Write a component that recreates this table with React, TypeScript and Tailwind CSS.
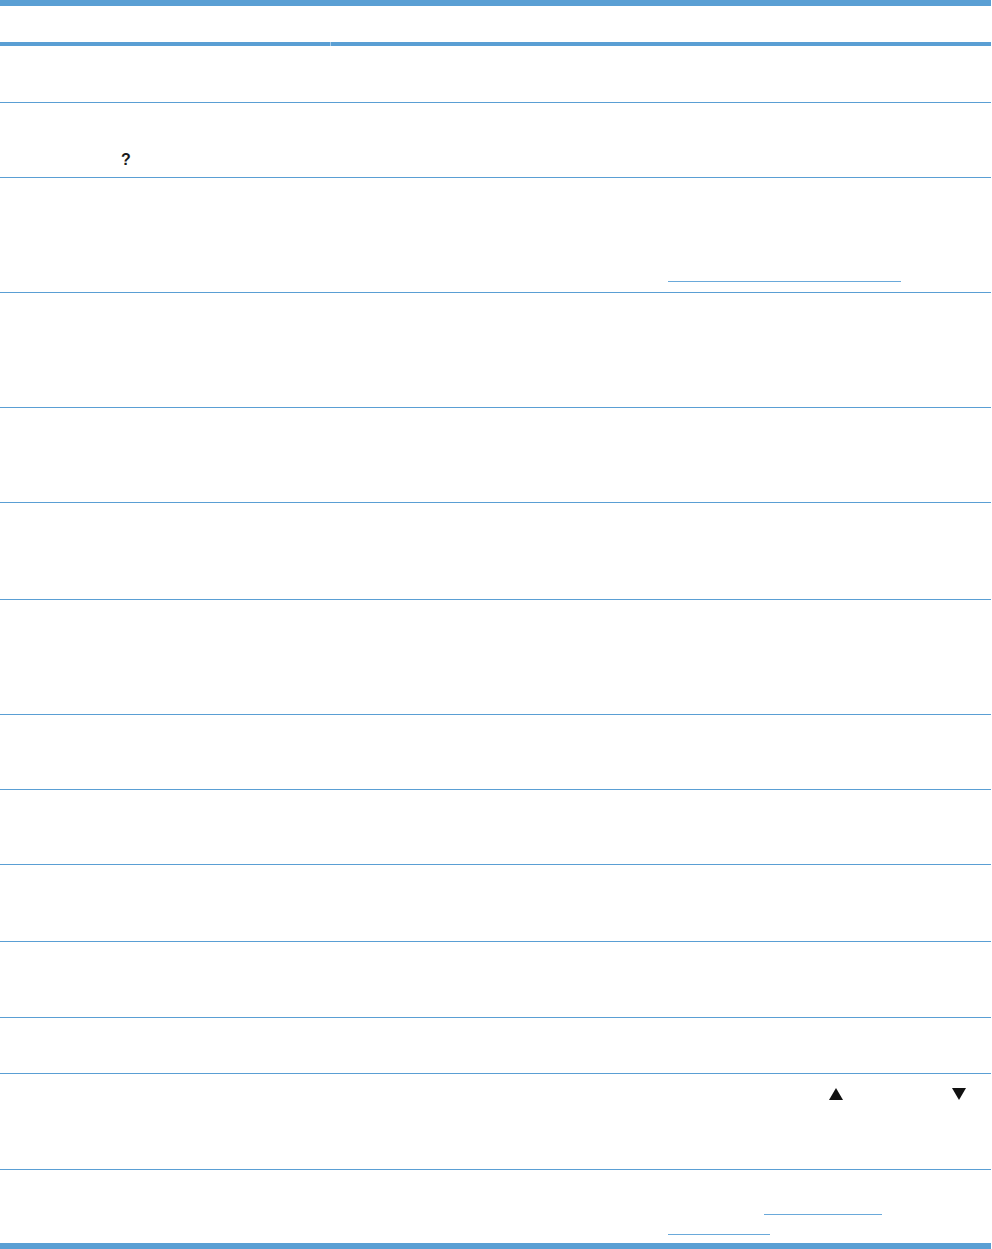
import React from "react";

const rowHeights = [56, 74, 114, 114, 94, 96, 114, 74, 74, 76, 75, 55, 95, 73];

function Tri({ down }: { down?: boolean }) {
  return (
    <svg width="14" height="12" viewBox="0 0 14 12" className="block">
      {down ? <path d="M0 0 H14 L7 12 Z" fill="#111" /> : <path d="M7 0 L14 12 H0 Z" fill="#111" />}
    </svg>
  );
}

function cellContent(i: number, side: "l" | "r") {
  if (i === 1 && side === "l") {
    return (
      <div className="pt-[48px] pl-[121px] text-[16px] font-bold leading-[18px] text-[#1a1a1a]" style={{ fontFamily: '"Liberation Sans", Arial, sans-serif' }}>
        ?
      </div>
    );
  }
  if (i === 2 && side === "r") {
    return (
      <div className="pt-[103px] pl-[337px]">
        <div className="h-px w-[233px] bg-[#6aa9da]" />
      </div>
    );
  }
  if (i === 12 && side === "r") {
    return (
      <div className="flex pt-[14px] pl-[498px]">
        <Tri />
        <div className="ml-[109px]">
          <Tri down />
        </div>
      </div>
    );
  }
  if (i === 13 && side === "r") {
    return (
      <div className="flex flex-col pt-[44px]">
        <div className="ml-[433px] h-px w-[118px] bg-[#6aa9da]" />
        <div className="ml-[337px] mt-[19px] h-px w-[102px] bg-[#6aa9da]" />
      </div>
    );
  }
  return null;
}

export default function App() {
  return (
    <div className="w-[992px] min-h-[1249px] bg-white">
      <div className="w-[991px]">
        <div className="h-[6px] bg-[#5a9fd4]" />
        <div className="h-[36px]" />
        <div className="flex h-[4px]">
          <div className="w-[330px] bg-[#5a9fd4]" />
          <div className="w-px bg-[#a6cbe9]" />
          <div className="flex-1 bg-[#5a9fd4]" />
        </div>
        {rowHeights.map((h, i) => (
          <div key={i}>
            {i > 0 && <div className="h-px bg-[#5a9fd4]" />}
            <div className="grid grid-cols-[331px_1fr]" style={{ height: h }}>
              <div>{cellContent(i, "l")}</div>
              <div>{cellContent(i, "r")}</div>
            </div>
          </div>
        ))}
        <div className="h-[6px] bg-[#5a9fd4]" />
      </div>
    </div>
  );
}
